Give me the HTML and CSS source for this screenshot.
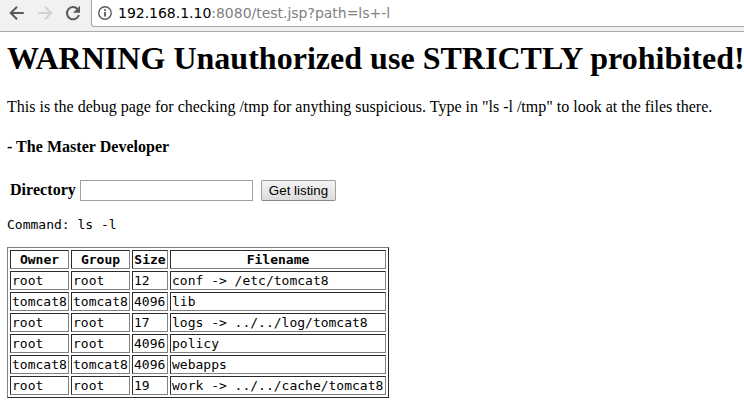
FILE: index.html
```html
<!DOCTYPE html>
<html lang="en">
<head>
<meta charset="utf-8">
<title>Debug page</title>
<link rel="stylesheet" href="styles.css">
</head>
<body>
<header class="toolbar">
  <svg class="nav" viewBox="0 0 91 31" aria-hidden="true">
    <path class="icon" d="M23.8 13H11.2M17 6.7L10.7 13l6.3 6.3"/>
    <path class="icon disabled" d="M38.2 13h12.6M45 6.7l6.3 6.3-6.3 6.3"/>
    <path class="icon" d="M77.6 9.1A6.1 6.1 0 1 0 78.9 15"/>
    <path class="tip" d="M80 5.7v7h-7z"/>
  </svg>
  <div class="address">
    <svg class="info" viewBox="0 0 14 14" aria-hidden="true">
      <circle cx="7" cy="7" r="6.2"/>
      <path d="M7 6v4.5M7 3.3v1.6"/>
    </svg>
    <span class="url"><span class="host">192.168.1.10</span>:8080/test.jsp?path=ls+-l</span>
  </div>
</header>
<main class="page">
  <h1>WARNING Unauthorized use STRICTLY prohibited!</h1>
  <p class="intro">This is the debug page for checking /tmp for anything suspicious. Type in "ls -l /tmp" to look at the files there.</p>
  <h4>- The Master Developer</h4>
  <form class="lookup">
    <label for="path">Directory</label>
    <input id="path" type="text">
    <button type="button">Get listing</button>
  </form>
  <p class="command">Command: ls -l</p>
  <table class="listing">
    <colgroup><col class="name"><col class="name"><col class="size"><col class="file"></colgroup>
    <tr><th>Owner</th><th>Group</th><th>Size</th><th>Filename</th></tr>
    <tr><td>root</td><td>root</td><td>12</td><td>conf -&gt; /etc/tomcat8</td></tr>
    <tr><td>tomcat8</td><td>tomcat8</td><td>4096</td><td>lib</td></tr>
    <tr><td>root</td><td>root</td><td>17</td><td>logs -&gt; ../../log/tomcat8</td></tr>
    <tr><td>root</td><td>root</td><td>4096</td><td>policy</td></tr>
    <tr><td>tomcat8</td><td>tomcat8</td><td>4096</td><td>webapps</td></tr>
    <tr><td>root</td><td>root</td><td>19</td><td>work -&gt; ../../cache/tomcat8</td></tr>
  </table>
</main>
</body>
</html>
```
FILE: styles.css
```css
* { box-sizing: border-box; }
body {
  margin: 0;
  background: #fff;
  color: #000;
  font: 16px/18px "Liberation Serif", serif;
  overflow: hidden;
}
.toolbar {
  display: flex;
  height: 32px;
  background: #f1f1f1;
  border-bottom: 1px solid #aaa;
}
.nav { flex: none; width: 91px; height: 31px; }
.icon { fill: none; stroke: #5a5a5a; stroke-width: 2; }
.disabled { stroke: #d2d2d2; }
.tip { fill: #5a5a5a; }
.address {
  display: flex;
  align-items: center;
  flex: 1;
  height: 27px;
  padding-left: 6px;
  background: #fff;
  border: 1px solid #a6a6a6;
  border-top: 0;
  border-right: 0;
  border-radius: 0 0 0 3px;
}
.info { width: 14px; height: 14px; margin-right: 6px; fill: none; stroke: #5a5a5a; stroke-width: 1.4; }
.info path { stroke-width: 1.8; }
.url { font: 14px/16px "DejaVu Sans", sans-serif; letter-spacing: -0.02px; color: #808080; white-space: nowrap; }
.host { color: #000; }
.page { padding: 8px 0 0 7px; }
h1 { margin: 0 0 21px; font-size: 32px; line-height: 37px; letter-spacing: 0.02px; white-space: nowrap; }
.intro { margin: 0 0 22px; white-space: nowrap; }
h4 { margin: 0 0 24px; font-size: 16px; letter-spacing: 0.03px; }
.lookup { display: flex; align-items: center; height: 21px; margin: 0 0 16px; padding-left: 3px; }
label { width: 70px; padding-bottom: 2px; font-weight: bold; letter-spacing: 0.05px; }
input { width: 173px; height: 21px; margin: 0 8px 0 0; padding: 1px; border: 1px solid #a0a0a0; }
button {
  width: 75px;
  height: 21px;
  padding: 0;
  border: 1px solid #a0a0a0;
  border-bottom-color: #888;
  border-radius: 2px;
  background: linear-gradient(#f4f4f4, #dcdcdc);
  color: #000;
  font: 13.333px/15px "Liberation Sans", sans-serif;
}
.command, .listing { font: 13px/15px "DejaVu Sans Mono", monospace; }
.command { margin: 0 0 15px; }
.listing {
  width: 382px;
  table-layout: fixed;
  border: 1px solid;
  border-color: #808080 #2b2b2b #2b2b2b #808080;
  border-spacing: 2px;
}
.name { width: 59px; }
.size { width: 36px; }
.file { width: 216px; }
th, td { padding: 1px; border: 1px solid; border-color: #2b2b2b #808080 #808080 #2b2b2b; white-space: nowrap; }
th { font-weight: bold; }
```
